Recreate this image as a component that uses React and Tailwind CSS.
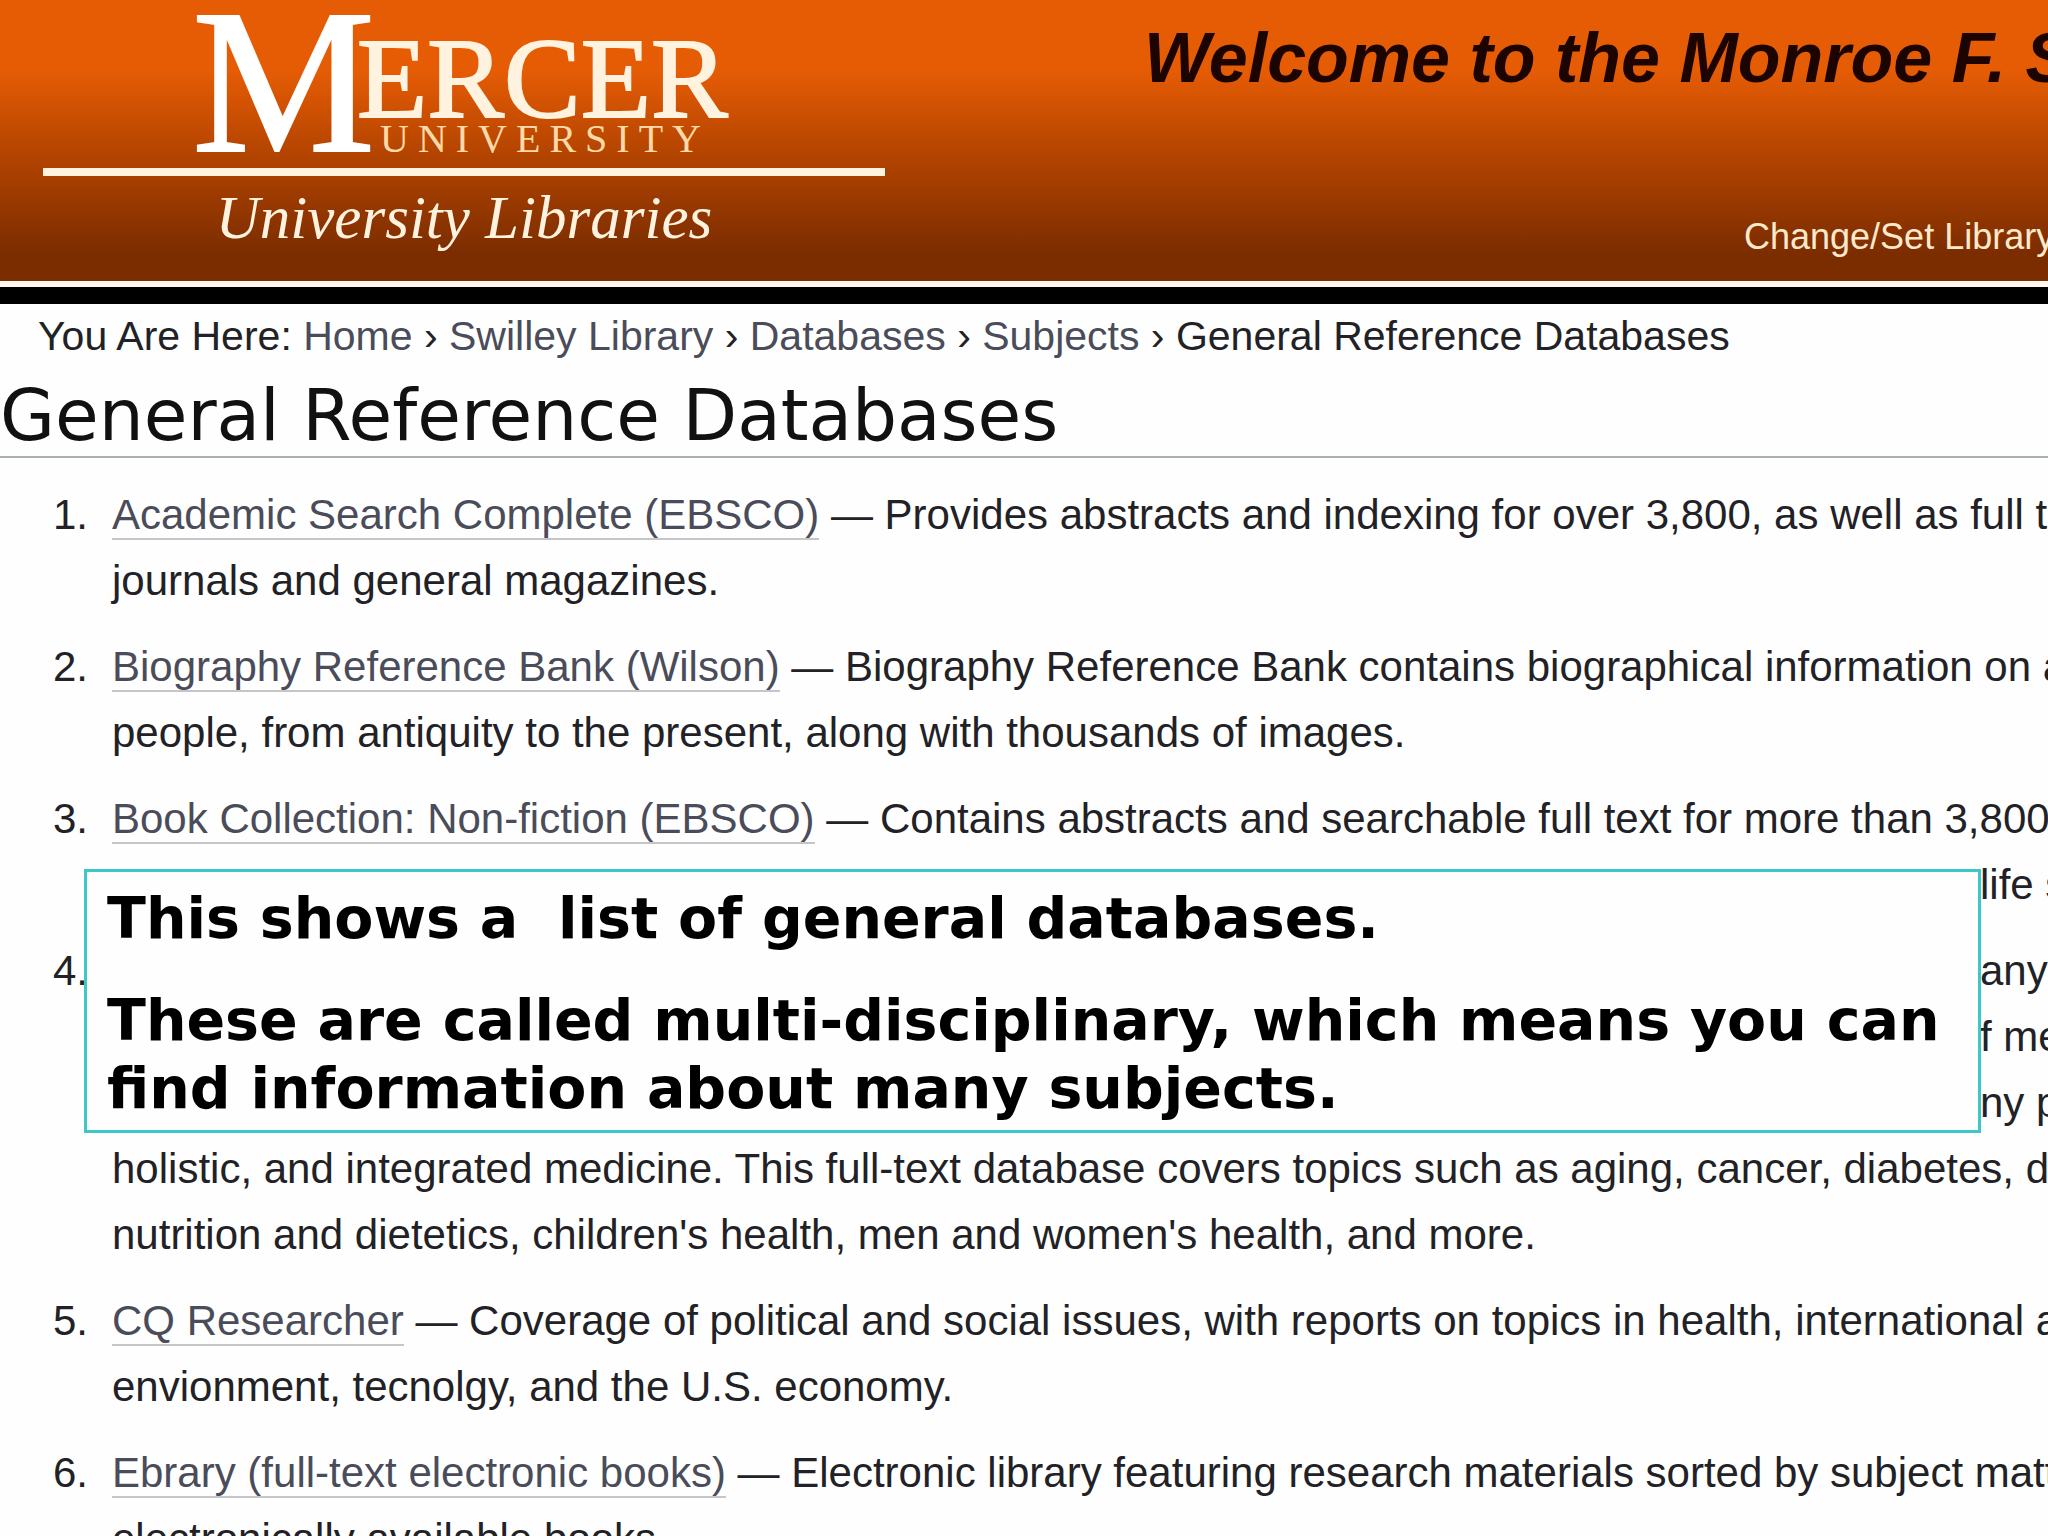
import React from 'react';

const breadcrumbs = ['Home', 'Swilley Library', 'Databases', 'Subjects'];

// `lines` follow the title, `tail` lines start at the right edge of the note
const databases = [
  {
    title: 'Academic Search Complete (EBSCO)',
    lead: 'Provides abstracts and indexing for over 3,800, as well as full text',
    lines: ['journals and general magazines.'],
  },
  {
    title: 'Biography Reference Bank (Wilson)',
    lead: 'Biography Reference Bank contains biographical information on approximately',
    lines: ['people, from antiquity to the present, along with thousands of images.'],
  },
  {
    title: 'Book Collection: Non-fiction (EBSCO)',
    lead: 'Contains abstracts and searchable full text for more than 3,800 popular',
    tail: ['life sciences'],
  },
  {
    tail: ['any', 'f medical', 'ny p'],
    lines: [
      'holistic, and integrated medicine. This full-text database covers topics such as aging, cancer, diabetes, drugs',
      "nutrition and dietetics, children's health, men and women's health, and more.",
    ],
  },
  {
    title: 'CQ Researcher',
    lead: 'Coverage of political and social issues, with reports on topics in health, international affairs',
    lines: ['envionment, tecnolgy, and the U.S. economy.'],
  },
  {
    title: 'Ebrary (full-text electronic books)',
    lead: 'Electronic library featuring research materials sorted by subject matter',
    lines: ['electronically available books.'],
  },
];

const Logo = () => (
  <a href="#" className="block w-[842px] shrink-0 text-[#fff3e0]">
    <svg viewBox="0 0 842 168" className="block w-full" fill="currentColor" role="img" aria-label="Mercer University">
      <g fontFamily="'Liberation Serif', serif">
        <text x="149" y="151" fontSize="206" fill="#fff" stroke="#fff" strokeWidth="2">M</text>
        <text x="314" y="117" fontSize="115" stroke="currentColor" strokeWidth="2">ERCER</text>
        <text x="337" y="152" fontSize="40" letterSpacing="9" fill="#ffd9a8">UNIVERSITY</text>
      </g>
    </svg>
    <div className="h-[8px] bg-[#fff3e0]" />
    <div className="text-center font-['Liberation_Serif',serif] text-[61px] leading-[84px] italic">
      University Libraries
    </div>
  </a>
);

const Header = () => (
  <header className="border-b-[17px] border-black">
    <div className="flex h-[287px] items-start justify-between border-b-[6px] border-[#fff8f0] bg-linear-to-b from-[#e65c05] from-25% via-[#b34400] via-55% to-[#7c2d00] to-90% pl-[43px]">
      <Logo />
      <div className="flex h-full w-[904px] shrink-0 flex-col justify-between pt-4 pb-5 whitespace-nowrap">
        <h2 className="text-[70px] leading-[84px] font-bold text-[#1c0500] italic">
          Welcome to the Monroe F. Swilley
        </h2>
        <a href="#" className="ml-[600px] text-[36px] leading-[48px] text-[#ffe9cc]">
          Change/Set Library
        </a>
      </div>
    </div>
  </header>
);

const Breadcrumbs = () => (
  <nav aria-label="Breadcrumb" className="pl-[38px] text-[41px] leading-[64px]">
    You Are Here:{' '}
    {breadcrumbs.map((crumb) => (
      <React.Fragment key={crumb}>
        <a href="#" className="text-[#4a4c5a]">{crumb}</a>
        {' › '}
      </React.Fragment>
    ))}
    General Reference Databases
  </nav>
);

const DatabaseItem = ({ number, item }) => (
  <li className="flex">
    <span className="w-[112px] shrink-0 pr-6 text-right">{number}.</span>
    <div>
      {item.title && (
        <p>
          <a href="#" className="border-b-2 border-[#c4c6c8] text-[#4a4c5a]">{item.title}</a>
          {' — '}
          {item.lead}
        </p>
      )}
      {item.tail && item.tail.map((line) => (
        <p key={line} className="pl-[1868px]">{line}</p>
      ))}
      {item.lines && item.lines.map((line) => (
        <p key={line}>{line}</p>
      ))}
    </div>
  </li>
);

const Note = () => (
  <aside className="absolute top-[869px] right-[67px] left-[84px] space-y-[34px] border-3 border-[#3cc8c8] bg-[#fefefe] pt-3 pr-4 pb-2 pl-5 font-['DejaVu_Sans',sans-serif] text-[57px] leading-[68px] font-bold text-black">
    <p className="whitespace-pre-wrap">This shows a  list of general databases.</p>
    <p>These are called multi-disciplinary, which means you can find information about many subjects.</p>
  </aside>
);

export default function App() {
  return (
    <div className="relative h-screen overflow-hidden bg-[#fefefe] font-['Liberation_Sans',sans-serif] text-[#222226]">
      <Header />
      <main className="whitespace-nowrap">
        <Breadcrumbs />
        <h1 className="border-b-2 border-[#a8b0b0] pt-2 font-['DejaVu_Sans',sans-serif] text-[71px] leading-[80px] text-[#111]">
          General Reference Databases
        </h1>
        <ol className="space-y-5 pt-6 text-[42px] leading-[66px]">
          {databases.map((item, index) => (
            <DatabaseItem key={index} number={index + 1} item={item} />
          ))}
        </ol>
      </main>
      <Note />
    </div>
  );
}
